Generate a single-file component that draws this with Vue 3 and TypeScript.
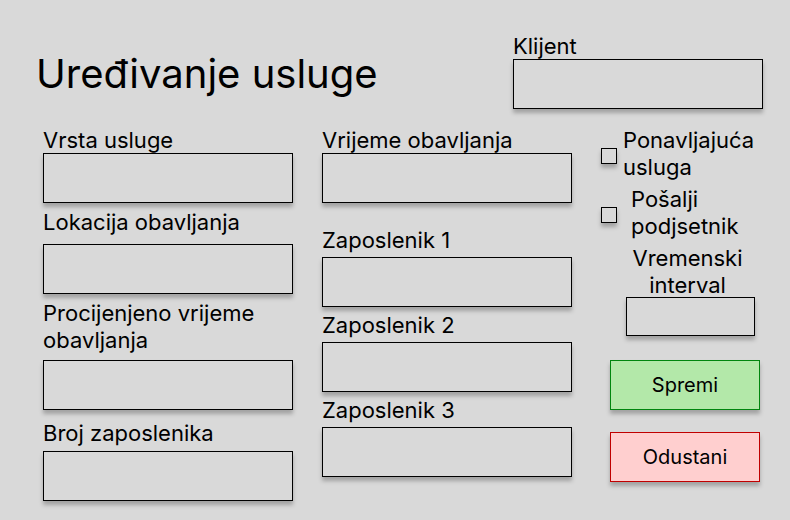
<script setup lang="ts">
import { reactive } from 'vue'

const form = reactive({
  client: '',
  kind: '',
  location: '',
  duration: '',
  staffCount: '',
  time: '',
  staff: ['', '', ''],
  recurring: false,
  reminder: false,
  interval: '',
})
</script>

<template>
  <form class="page" @submit.prevent>
    <header class="top">
      <h1>Uređivanje usluge</h1>
      <div class="field tight client">
        <label for="client">Klijent</label>
        <input id="client" v-model="form.client" type="text" />
      </div>
    </header>

    <main class="columns">
      <section class="column">
        <div class="field tight">
          <label for="kind">Vrsta usluge</label>
          <input id="kind" v-model="form.kind" type="text" />
        </div>
        <div class="field roomy">
          <label for="location">Lokacija obavljanja</label>
          <input id="location" v-model="form.location" type="text" />
        </div>
        <div class="field roomy">
          <label for="duration">Procijenjeno vrijeme obavljanja</label>
          <input id="duration" v-model="form.duration" type="text" />
        </div>
        <div class="field count">
          <label for="count">Broj zaposlenika</label>
          <input id="count" v-model="form.staffCount" type="text" />
        </div>
      </section>

      <section class="column">
        <div class="field tight time">
          <label for="time">Vrijeme obavljanja</label>
          <input id="time" v-model="form.time" type="text" />
        </div>
        <div v-for="n in 3" :key="n" class="field staff">
          <label :for="`staff-${n}`">Zaposlenik {{ n }}</label>
          <input :id="`staff-${n}`" v-model="form.staff[n - 1]" type="text" />
        </div>
      </section>

      <section class="side">
        <div class="check">
          <input id="recurring" v-model="form.recurring" type="checkbox" />
          <label for="recurring">Ponavljajuća usluga</label>
        </div>
        <div class="check reminder">
          <input id="reminder" v-model="form.reminder" type="checkbox" />
          <label for="reminder">Pošalji podjsetnik</label>
        </div>
        <div class="field interval">
          <label for="interval">Vremenski interval</label>
          <input id="interval" v-model="form.interval" type="text" />
        </div>
        <div class="actions">
          <button class="save" type="submit">Spremi</button>
          <button class="cancel" type="button">Odustani</button>
        </div>
      </section>
    </main>
  </form>
</template>

<style>
body {
  margin: 0;
  background: #d9d9d9;
}
</style>

<style scoped>
.page {
  box-sizing: border-box;
  padding: 33px 27px 16px 36px;
  color: #000;
  font-family: Inter, sans-serif;
  font-size: 22px;
  font-weight: 400;
  line-height: 27px;
}

.top {
  display: flex;
  justify-content: space-between;
  align-items: flex-start;
}

h1 {
  margin: 17px 0 0;
  font-size: 40px;
  font-weight: 400;
  line-height: 48px;
}

.field {
  display: flex;
  flex-direction: column;
}

.tight label {
  margin-bottom: -1px;
}

.client {
  width: 250px;
}

input,
button {
  box-sizing: border-box;
  margin: 0;
  border: 1px solid #000;
  border-radius: 0;
  background: #d9d9d9;
  box-shadow: 0 4px 4px rgba(0, 0, 0, 0.25);
  color: inherit;
  font: inherit;
}

.field input {
  width: 100%;
  height: 50px;
  padding: 0 12px;
}

.columns {
  display: grid;
  grid-template-columns: 250px 250px 1fr;
  column-gap: 29px;
  margin-top: 18px;
  padding-left: 7px;
}

.roomy {
  margin-top: 6px;
  gap: 8px;
}

.roomy + .roomy {
  gap: 6px;
}

.count {
  margin-top: 10px;
  gap: 4px;
}

.time {
  margin-bottom: 24px;
}

.staff {
  gap: 3px;
  margin-bottom: 5px;
}

.check {
  display: flex;
  align-items: flex-start;
  gap: 6px;
  margin-bottom: 5px;
}

.check input {
  flex: none;
  appearance: none;
  width: 16px;
  height: 16px;
  margin-top: 21px;
}

.check input:checked {
  background: #000;
}

.reminder {
  gap: 14px;
}

.interval {
  width: 129px;
  margin-left: 25px;
  text-align: center;
}

.interval label {
  margin: 0 6px -2px 0;
}

.interval input {
  height: 39px;
}

.actions {
  display: flex;
  flex-direction: column;
  gap: 22px;
  margin: 24px 3px 0 9px;
}

button {
  height: 50px;
  font-size: 20px;
}

.save {
  border-color: #00850e;
  background: #b3e8a9;
}

.cancel {
  border-color: #c00000;
  background: #ffcfcf;
}
</style>
